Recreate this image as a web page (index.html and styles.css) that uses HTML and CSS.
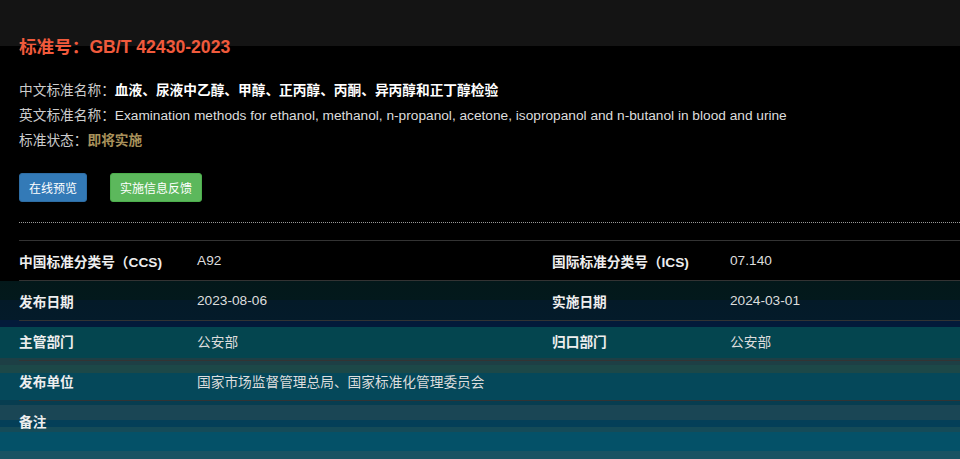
FILE: index.html
```html
<!DOCTYPE html>
<html lang="zh-CN">
<head>
    <meta charset="UTF-8">
    <meta name="viewport" content="width=device-width, initial-scale=1.0">
    <title>GB/T 42430-2023</title>
    <link rel="stylesheet" href="styles.css">
</head>
<body>
    <div class="container">
        <h1 class="std-title">标准号：GB/T 42430-2023</h1>
        <div class="info">
            <p>中文标准名称：<strong>血液、尿液中乙醇、甲醇、正丙醇、丙酮、异丙醇和正丁醇检验</strong></p>
            <p>英文标准名称：<span class="en">Examination methods for ethanol, methanol, n-propanol, acetone, isopropanol and n-butanol in blood and urine</span></p>
            <p>标准状态：<span class="status">即将实施</span></p>
        </div>
        <div class="actions">
            <button class="btn btn-blue">在线预览</button>
            <button class="btn btn-green">实施信息反馈</button>
        </div>
        <div class="dotted"></div>
        <div class="table-wrap">
            <table class="detail">
                <colgroup>
                    <col class="c-label">
                    <col class="c-value">
                    <col class="c-label">
                    <col class="c-value">
                </colgroup>
                <tr>
                    <th>中国标准分类号（CCS)</th>
                    <td>A92</td>
                    <th>国际标准分类号（ICS)</th>
                    <td>07.140</td>
                </tr>
                <tr>
                    <th>发布日期</th>
                    <td>2023-08-06</td>
                    <th>实施日期</th>
                    <td>2024-03-01</td>
                </tr>
                <tr>
                    <th>主管部门</th>
                    <td>公安部</td>
                    <th>归口部门</th>
                    <td>公安部</td>
                </tr>
                <tr>
                    <th>发布单位</th>
                    <td colspan="3">国家市场监督管理总局、国家标准化管理委员会</td>
                </tr>
                <tr>
                    <th>备注</th>
                    <td colspan="3"></td>
                </tr>
            </table>
        </div>
    </div>
</body>
</html>
```

FILE: styles.css
```css
html {
    background: #000;
}
body {
    margin: 0;
    height: 459px;
    overflow: hidden;
    font-family: "Liberation Sans", Arial, "Noto Sans CJK SC", sans-serif;
    font-size: 13.7px;
    color: #ddd;
    background: linear-gradient(to bottom,
        #141414 0, #141414 46px,
        #000 46px, #000 281px,
        #03181a 281px, #03191c 300px,
        #041a28 300px, #041b2a 320px,
        #031a3a 320px, #031a3a 327px,
        #04454f 327px, #04454f 358px,
        #1d3f45 358px, #1d3f45 365px,
        #1c4848 365px, #1c4848 373px,
        #05485a 373px, #05485a 400px,
        #073d50 400px, #073d50 405px,
        #1a4655 405px, #1a4655 420px,
        #043f58 420px, #043f58 427px,
        #154b58 427px, #154b58 432px,
        #045168 432px, #045168 451px,
        #1a5363 451px, #1a5363 459px);
}
.container {
    padding: 34px 0 0 19px;
}
.std-title {
    margin: 0;
    font-size: 17.6px;
    line-height: 26px;
    font-weight: bold;
    color: #f05a3c;
}
.info {
    margin-top: 18px;
}
.info p {
    margin: 0;
    line-height: 25px;
    color: #ccc;
}
.info strong {
    color: #fff;
}
.info .en {
    color: #ddd;
}
.status {
    color: #a8915a;
    font-weight: bold;
}
.actions {
    display: flex;
    gap: 23px;
    margin-top: 20px;
}
.btn {
    height: 29px;
    padding: 0 9px;
    border: 1px solid transparent;
    border-radius: 3px;
    font-family: inherit;
    font-size: 12px;
    color: #fff;
    cursor: pointer;
}
.btn-blue {
    background-color: #337ab7;
    border-color: #2e6da4;
}
.btn-green {
    background-color: #5cb85c;
    border-color: #4cae4c;
}
.dotted {
    margin-top: 20px;
    border-top: 1px dotted #999;
}
.table-wrap {
    margin-top: 17px;
    overflow: hidden;
}
.detail {
    width: 1066px;
    table-layout: fixed;
    border-collapse: collapse;
}
.c-label {
    width: 178px;
}
.c-value {
    width: 355px;
}
.detail th,
.detail td {
    height: 39px;
    padding: 0;
    border-top: 1px solid #333;
    text-align: left;
    vertical-align: middle;
}
.detail th {
    font-weight: bold;
    color: #eee;
}
.detail td {
    color: #ddd;
}
```
